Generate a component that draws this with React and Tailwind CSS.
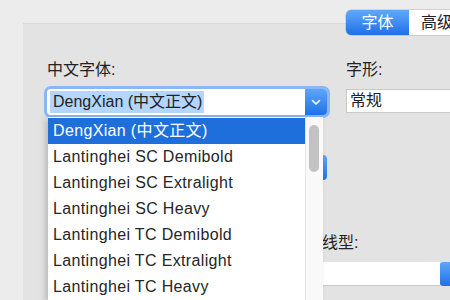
import React from 'react'

const fonts = [
  'DengXian (中文正文)',
  'Lantinghei SC Demibold',
  'Lantinghei SC Extralight',
  'Lantinghei SC Heavy',
  'Lantinghei TC Demibold',
  'Lantinghei TC Extralight',
  'Lantinghei TC Heavy',
]

function Chevron() {
  return (
    <svg width="10" height="7" viewBox="0 0 10 7" fill="none">
      <path d="M1.5 1.5 L5 5 L8.5 1.5" stroke="white" strokeWidth="1.6" strokeLinecap="round" strokeLinejoin="round" />
    </svg>
  )
}

export default function App() {
  return (
    <div
      className="w-[450px] h-[300px] overflow-hidden bg-[#ececec] text-[#222] text-[16px] leading-[20px]"
      style={{ fontFamily: '"Liberation Sans", "Noto Sans CJK SC", sans-serif' }}
    >
      {/* Tabs */}
      <div className="relative z-10 flex pl-[346px] pt-[10px]">
        <div className="flex h-[25px] w-[120px] shrink-0 overflow-hidden rounded-l-[5px] shadow-[0_0_0_0.5px_#b8b8b8]">
          <div className="flex w-[63px] items-center justify-center bg-gradient-to-b from-[#62a8f9] to-[#1b6fea] text-white">
            字体
          </div>
          <div className="flex flex-1 items-center pl-[12px] bg-white">高级</div>
        </div>
      </div>

      {/* Panel */}
      <div className="-mt-[12px] ml-[23px] h-[290px] border-t border-[#d9d9d9] bg-[#e3e3e3] pt-[36px]">
        <div className="flex gap-[19px] pl-[24px]">
          {/* Left column */}
          <div className="w-[280px] shrink-0">
            <div>中文字体:</div>
            <div className="relative mt-[9px]">
              <div className="flex h-[26px] rounded-[4px] bg-white ring-[3px] ring-[#8ab6f1]">
                <div className="flex flex-1 items-center pl-[3px]">
                  <span className="bg-[#b4d5fe] pl-[3px] pr-[2px] leading-[22px]">DengXian (中文正文)</span>
                </div>
                <div className="flex w-[22px] items-center justify-center rounded-r-[4px] bg-gradient-to-b from-[#5ea5f8] to-[#1d71ea]">
                  <Chevron />
                </div>
              </div>

              {/* Hidden controls under the popup */}
              <div className="mt-[40px] flex justify-end">
                <div className="h-[25px] w-[60px] rounded-[4px] bg-gradient-to-b from-[#5ea5f8] to-[#1d71ea]" />
              </div>

              {/* Popup list */}
              <div className="absolute left-[1px] top-[28px] z-20 flex w-[275px] bg-white shadow-[-3px_2px_6px_rgba(0,0,0,0.18)]">
                <ul className="flex-1 pt-[1px] tracking-[0.35px] text-[#262626]">
                  {fonts.map((f, i) => (
                    <li
                      key={f}
                      className={
                        i === 0
                          ? 'h-[26px] pl-[5px] leading-[25px] bg-[#1e6fdc] text-white'
                          : 'h-[26px] pl-[5px] leading-[26px]'
                      }
                    >
                      {f}
                    </li>
                  ))}
                </ul>
                <div className="w-[18px] border-l border-[#e6e6e6] bg-[#f9f9f9] pl-[3px] pt-[8px]">
                  <div className="h-[47px] w-[10px] rounded-full bg-[#c2c2c2]" />
                </div>
              </div>
            </div>
          </div>

          {/* Right column */}
          <div className="flex-1">
            <div>字形:</div>
            <div className="mt-[9px] flex h-[24px] w-[120px] items-center border border-[#c9c9c9] bg-white pl-[3px]">
              常规
            </div>
          </div>
        </div>

        {/* Lower section */}
        <div className="mt-[53px] pl-[299px]">
          <div>线型:</div>
          <div className="mt-[9px] flex h-[24px]">
            <div className="w-[123px] border-b border-[#c9c9c9] bg-white" />
            <div className="w-[10px] rounded-l-[3px] bg-gradient-to-b from-[#5ea5f8] to-[#1d71ea]" />
          </div>
        </div>
      </div>
    </div>
  )
}
